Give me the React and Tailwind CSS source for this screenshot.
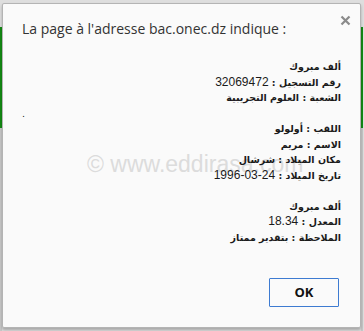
import React from 'react';

const Num = ({ children }) => (
  <span className="font-['Liberation_Sans',sans-serif] text-[12px] font-normal">{children}</span>
);

const lines = [
  'ألف مبروك',
  <>رقم التسجيل : <Num>32069472</Num></>,
  'الشعبة : العلوم التجريبية',
  null,
  'اللقب : أولولو',
  'الاسم : مريم',
  'مكان الميلاد : شرشال',
  <>تاريخ الميلاد : <Num>24-03-1996</Num></>,
  '',
  'ألف مبروك',
  <>المعدل : <Num>18.34</Num></>,
  'الملاحظة : بتقدير ممتاز',
];

const Strip = () => (
  <div className="flex w-[2px] flex-col">
    <div className="h-[24px] bg-[#dedede]" />
    <div className="h-[101px] bg-[#138a13]" />
    <div className="flex-1 bg-[#c8c8c8]" />
  </div>
);

export default function App() {
  return (
    <div className="flex h-[331px] w-[364px] flex-col bg-[#dedede] font-['Open_Sans',sans-serif]">
      <div className="h-[3px]" />
      <div className="flex flex-1">
        <Strip />
        <div className="relative mb-[3px] flex w-[359px] flex-col rounded-[2px] border border-[#b4b4b4] bg-[#fafafa] shadow-[0_2px_3px_rgba(0,0,0,0.25)]">
          <button className="absolute right-[7px] top-[8px] flex h-[16px] w-[16px] items-center justify-center">
            <svg width="11" height="11" viewBox="0 0 11 11">
              <path d="M1.5 1.5 L9.5 9.5 M9.5 1.5 L1.5 9.5" stroke="#8a8a8a" strokeWidth="2.2" />
            </svg>
          </button>
          <div className="pl-[19px] pt-[15px] text-[14px] leading-[20px] text-[#333]">
            La page à l'adresse bac.onec.dz indique :
          </div>
          <div
            dir="rtl"
            className="relative mt-[20px] pr-[19px] pl-[19px] font-['DejaVu_Sans',sans-serif] text-[9.5px] font-semibold leading-[15.5px] text-[#1a1a1a]"
          >
            <div
              dir="ltr"
              className="pointer-events-none absolute left-[84px] top-[93px] whitespace-nowrap font-['Liberation_Sans',sans-serif] text-[23px] font-normal leading-[24px] text-[#dcdcdc]"
            >
              © www.eddirasa.com
            </div>
            {lines.map((t, i) =>
              t === null ? (
                <div key={i} dir="ltr" className="relative text-left font-normal">.</div>
              ) : (
                <div key={i} className="relative h-[15.5px] whitespace-nowrap">{t}</div>
              )
            )}
          </div>
          <div className="mt-auto flex justify-end pb-[20px] pr-[21px]">
            <button className="h-[29px] w-[70px] rounded-[1px] border border-[#3d7bd1] bg-[#fafafa] font-['Open_Sans',sans-serif] text-[13px] font-bold text-[#111]">
              OK
            </button>
          </div>
        </div>
        <Strip />
      </div>
    </div>
  );
}
